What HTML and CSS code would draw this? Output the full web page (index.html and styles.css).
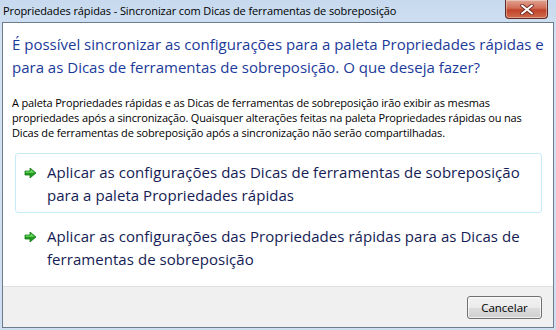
FILE: index.html
```html
<!DOCTYPE html>
<html lang="pt">
<head>
    <meta charset="UTF-8">
    <title>Propriedades rápidas - Sincronizar</title>
    <link rel="stylesheet" href="styles.css">
</head>
<body>
    <div class="window">
        <div class="titlebar">
            <span class="title">Propriedades rápidas - Sincronizar com Dicas de ferramentas de sobreposição</span>
            <button class="close" title="Fechar">
                <svg width="14" height="11" viewBox="0 0 14 11">
                    <path d="M2 1.5 L12 9.5 M12 1.5 L2 9.5" stroke="#6b2a20" stroke-width="3.6" stroke-linecap="round"/>
                    <path d="M2 1.5 L12 9.5 M12 1.5 L2 9.5" stroke="#fff" stroke-width="2" stroke-linecap="round"/>
                </svg>
            </button>
        </div>
        <div class="client">
            <div class="content">
                <h1 class="instruction">É possível sincronizar as configurações para a paleta Propriedades rápidas e para as Dicas de ferramentas de sobreposição. O que deseja fazer?</h1>
                <p class="note">A paleta Propriedades rápidas e as Dicas de ferramentas de sobreposição irão exibir as mesmas propriedades após a sincronização. Quaisquer alterações feitas na paleta Propriedades rápidas ou nas Dicas de ferramentas de sobreposição após a sincronização não serão compartilhadas.</p>
                <div class="links">
                    <a class="cmd-link hot" href="#">
                        <svg class="arrow" width="13" height="12" viewBox="0 0 13 12">
                            <path d="M1 4 H6 V1 L12 6 L6 11 V8 H1 Z" fill="#1f9a1f" stroke="#17781a" stroke-width="0.8" stroke-linejoin="round"/>
                            <path d="M1.6 4.6 H6.6 V2.4 L10.6 5.8 H1.6 Z" fill="#6fdc5f"/>
                        </svg>
                        <span>Aplicar as configurações das Dicas de ferramentas de sobreposição para a paleta Propriedades rápidas</span>
                    </a>
                    <a class="cmd-link" href="#">
                        <svg class="arrow" width="13" height="12" viewBox="0 0 13 12">
                            <path d="M1 4 H6 V1 L12 6 L6 11 V8 H1 Z" fill="#1f9a1f" stroke="#17781a" stroke-width="0.8" stroke-linejoin="round"/>
                            <path d="M1.6 4.6 H6.6 V2.4 L10.6 5.8 H1.6 Z" fill="#6fdc5f"/>
                        </svg>
                        <span>Aplicar as configurações das Propriedades rápidas para as Dicas de ferramentas de sobreposição</span>
                    </a>
                </div>
            </div>
            <div class="footer">
                <button class="btn">Cancelar</button>
            </div>
        </div>
    </div>
</body>
</html>
```

FILE: styles.css
```css
body {
    margin: 0;
    font-family: "Open Sans", "Noto Sans", sans-serif;
}
.window {
    width: 556px;
    height: 330px;
    box-sizing: border-box;
    padding: 0 2px 2px 2px;
    background: linear-gradient(#c6d9ee, #d5e3f3 40px, #cfdef0);
    display: flex;
    flex-direction: column;
}
.titlebar {
    height: 22px;
    display: flex;
    align-items: flex-start;
    justify-content: space-between;
    flex-shrink: 0;
}
.title {
    font-size: 11px;
    color: #000;
    padding: 3px 0 0 1px;
    letter-spacing: -0.1px;
}
.close {
    width: 43px;
    height: 19px;
    margin-right: 6px;
    border: 1px solid #5e2b24;
    border-top: none;
    border-radius: 0 0 4px 4px;
    background: linear-gradient(#e0a493, #d06d56 45%, #c0442c 55%, #cf6a4c);
    box-shadow: inset 0 0 0 1px rgba(255,255,255,0.35);
    padding: 0;
    display: flex;
    align-items: center;
    justify-content: center;
}
.client {
    flex: 1;
    border: 1px solid #6d7c8c;
    background: #fff;
    display: flex;
    flex-direction: column;
}
.content {
    flex: 1;
    padding: 10px 3px 0 9px;
}
.instruction {
    margin: 0;
    font-size: 15px;
    font-weight: normal;
    line-height: 23px;
    color: #1b3a9a;
    letter-spacing: 0;
}
.note {
    margin: 16px 0 0 0;
    font-size: 11px;
    line-height: 15px;
    color: #000;
    letter-spacing: -0.15px;
}
.links {
    margin: 13px 8px 0 3px;
    display: flex;
    flex-direction: column;
    gap: 4px;
}
.cmd-link {
    display: flex;
    align-items: flex-start;
    gap: 10px;
    padding: 7px 10px 5px 8px;
    border: 1px solid transparent;
    border-radius: 3px;
    text-decoration: none;
    color: #151c55;
    font-size: 15px;
    line-height: 23px;
    letter-spacing: 0.05px;
}
.cmd-link.hot {
    border-color: #c6ecf8;
}
.arrow {
    flex-shrink: 0;
    margin-top: 6px;
}
.footer {
    height: 40px;
    flex-shrink: 0;
    background: #f0f0f0;
    border-top: 1px solid #dfdfdf;
    display: flex;
    align-items: center;
    justify-content: flex-end;
    padding-right: 11px;
}
.btn {
    width: 75px;
    height: 23px;
    border: 1px solid #707070;
    border-radius: 3px;
    background: linear-gradient(#f2f2f2, #ebebeb 50%, #dddddd 51%, #cfcfcf);
    box-shadow: inset 0 0 0 1px rgba(255,255,255,0.7);
    font-family: "Open Sans", "Noto Sans", sans-serif;
    font-size: 11.5px;
    color: #000;
    padding: 0;
}
```
